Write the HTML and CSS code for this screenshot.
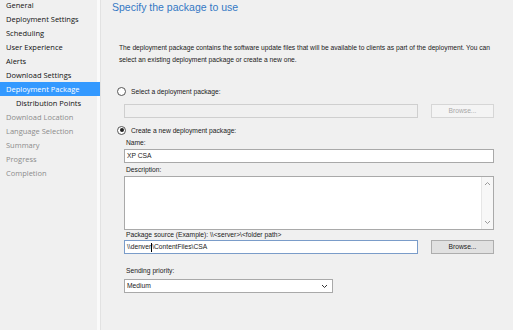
FILE: index.html
```html
<!DOCTYPE html>
<html lang="en">
<head>
  <meta charset="UTF-8">
  <title>Deployment Package</title>
  <link rel="stylesheet" href="styles.css">
</head>
<body>
  <div class="wizard">
    <div class="sidebar">
      <div class="step">General</div>
      <div class="step">Deployment Settings</div>
      <div class="step">Scheduling</div>
      <div class="step">User Experience</div>
      <div class="step">Alerts</div>
      <div class="step">Download Settings</div>
      <div class="step active">Deployment Package</div>
      <div class="step sub">Distribution Points</div>
      <div class="step off">Download Location</div>
      <div class="step off">Language Selection</div>
      <div class="step off">Summary</div>
      <div class="step off">Progress</div>
      <div class="step off">Completion</div>
    </div>

    <div class="page">
      <h1>Specify the package to use</h1>
      <p class="intro">The deployment package contains the software update files that will be available to clients as part of the deployment. You can select an existing deployment package or create a new one.</p>

      <label class="radio"><span class="dot"></span>Select a deployment package:</label>
      <div class="row">
        <div class="field disabled wide"></div>
        <div class="btn disabled">Browse...</div>
      </div>

      <label class="radio"><span class="dot checked"></span>Create a new deployment package:</label>
      <div class="group">
        <div class="lbl">Name:</div>
        <div class="field">XP CSA</div>
        <div class="lbl desc">Description:</div>
        <div class="field area">
          <div class="area-text"></div>
          <div class="scroll">
            <svg width="7" height="5" viewBox="0 0 7 5"><path d="M1 4L3.5 1.5L6 4" fill="none" stroke="#9a9a9a" stroke-width="1"/></svg>
            <svg width="7" height="5" viewBox="0 0 7 5"><path d="M1 1L3.5 3.5L6 1" fill="none" stroke="#9a9a9a" stroke-width="1"/></svg>
          </div>
        </div>
        <div class="lbl src">Package source (Example): \\&lt;server&gt;\&lt;folder path&gt;</div>
        <div class="row">
          <div class="field wide active-field">\\denver<span class="caret"></span>\ContentFiles\CSA</div>
          <div class="btn">Browse...</div>
        </div>
        <div class="lbl prio">Sending priority:</div>
        <div class="field select">
          <span>Medium</span>
          <svg width="7" height="5" viewBox="0 0 7 5"><path d="M1 1L3.5 3.5L6 1" fill="none" stroke="#333" stroke-width="1"/></svg>
        </div>
      </div>
    </div>
  </div>
</body>
</html>
```

FILE: styles.css
```css
body {
  margin: 0;
  background: #f0f0f0;
  color: #1a1a1a;
  font-family: "Liberation Sans", Arial, sans-serif;
  overflow: hidden;
}
.wizard {
  display: flex;
  height: 330px;
}
.sidebar {
  width: 100px;
  flex-shrink: 0;
  margin-top: -2px;
  box-shadow: inset -3px 0 #fafafa;
  border-right: 1px solid #e2e2e2;
  font-family: "Open Sans", "Noto Sans", sans-serif;
  font-size: 7.5px;
  color: #111;
}
.step {
  height: 14px;
  line-height: 14px;
  padding-left: 6px;
  white-space: nowrap;
}
.step.active {
  background: #3399ff;
  color: #ffffff;
}
.step.sub {
  padding-left: 16px;
}
.step.off {
  color: #8c8c8c;
}
.page {
  flex: 1;
  padding-left: 11px;
  font-size: 6.7px;
}
h1 {
  margin: 0;
  font-weight: normal;
  font-size: 10.5px;
  line-height: 15px;
  color: #3478c4;
}
.intro {
  margin: 27px 0 0 7px;
  width: 390px;
  line-height: 12px;
}
.radio {
  display: flex;
  align-items: center;
  gap: 5px;
  margin: 20px 0 0 5px;
  height: 10px;
}
.dot {
  width: 7px;
  height: 7px;
  border: 1px solid #555;
  border-radius: 50%;
  background: #fff;
  display: flex;
  align-items: center;
  justify-content: center;
}
.dot.checked::after {
  content: "";
  width: 4px;
  height: 4px;
  border-radius: 50%;
  background: #222;
}
.row {
  display: flex;
  align-items: center;
  gap: 13px;
  margin-left: 12px;
  margin-top: 8px;
}
.group .row {
  margin-left: 0;
  margin-top: 0;
}
.radio + .row + .radio {
  margin-top: 7px;
}
.group {
  margin-left: 12px;
  width: 370px;
}
.lbl {
  padding-left: 2px;
  height: 12px;
  line-height: 12px;
  margin-top: 2px;
}
.lbl.desc {
  margin-top: 1px;
}
.lbl.src {
  margin-top: 0;
  height: 10px;
  line-height: 10px;
}
.field {
  box-sizing: border-box;
  height: 14px;
  line-height: 12px;
  border: 1px solid #a9a9a9;
  background: #fff;
  padding-left: 2px;
  white-space: nowrap;
}
.field.wide {
  width: 294px;
}
.field.disabled {
  background: #f0f0f0;
  border-color: #cfcfcf;
}
.active-field {
  border-color: #7a9cc9;
}
.caret {
  display: inline-block;
  width: 1px;
  height: 9px;
  background: #000;
  vertical-align: middle;
}
.btn {
  box-sizing: border-box;
  width: 63px;
  height: 14px;
  line-height: 12px;
  text-align: center;
  border: 1px solid #adadad;
  background: #e1e1e1;
}
.btn.disabled {
  background: #f4f4f4;
  border-color: #d6d6d6;
  color: #a8a8a8;
}
.area {
  display: flex;
  height: 54px;
  padding: 0;
}
.area-text {
  flex: 1;
}
.scroll {
  width: 11px;
  border-left: 1px solid #e6e6e6;
  background: #f7f7f7;
  display: flex;
  flex-direction: column;
  justify-content: space-between;
  align-items: center;
  padding: 4px 0;
}
.prio {
  margin-top: 11px;
  margin-bottom: 2px;
}
.select {
  width: 209px;
  display: flex;
  align-items: center;
  justify-content: space-between;
  padding-right: 4px;
}
```
